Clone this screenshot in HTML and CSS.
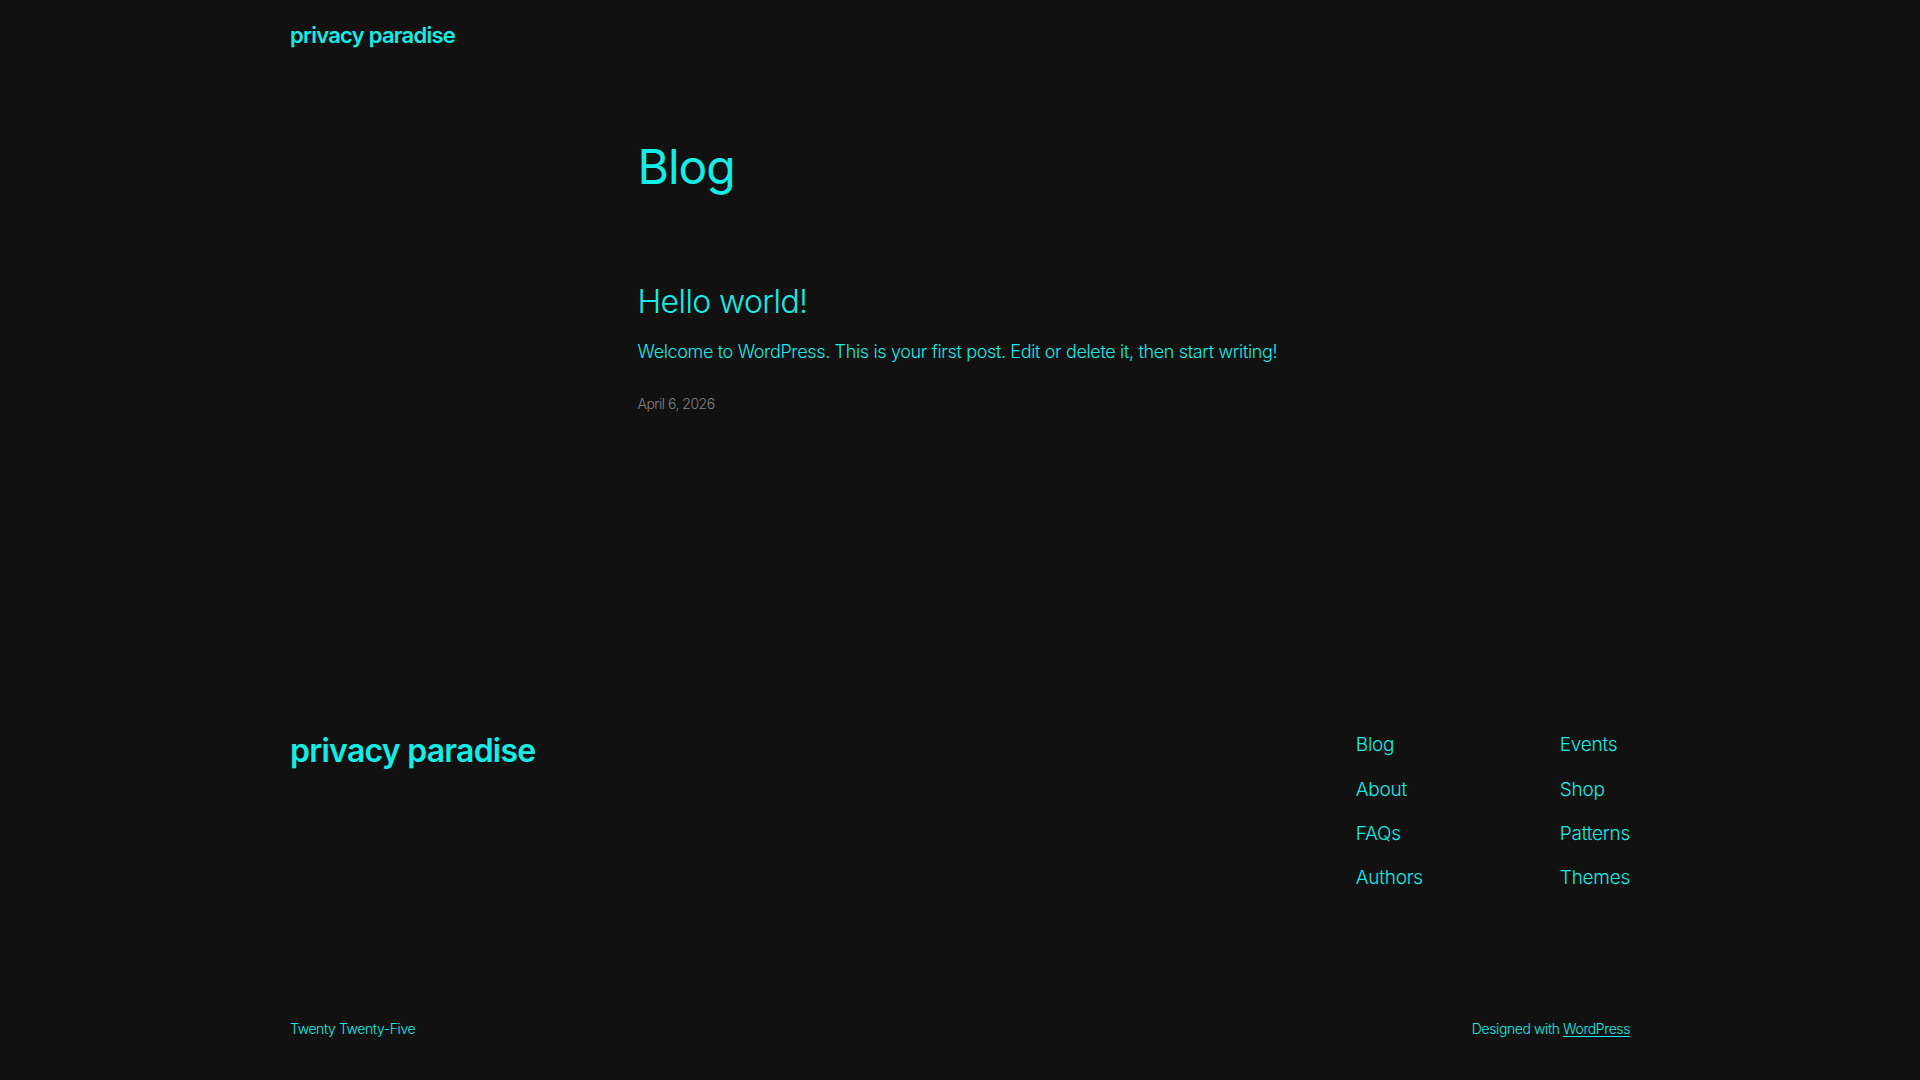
FILE: index.html
```html
<!DOCTYPE html>
<html lang="en">
<head>
<meta charset="utf-8">
<title>Blog – privacy paradise</title>
<link rel="stylesheet" href="styles.css">
</head>
<body>
<header class="site-header">
  <div class="wide">
    <a class="site-title" href="#">privacy paradise</a>
  </div>
</header>
<main class="site-main">
  <div class="content">
    <h1 class="page-title">Blog</h1>
    <article class="post">
      <h2 class="post-title"><a href="#">Hello world!</a></h2>
      <p class="post-excerpt">Welcome to WordPress. This is your first post. Edit or delete it, then start writing!</p>
      <time class="post-date">April 6, 2026</time>
    </article>
  </div>
</main>
<footer class="site-footer">
  <div class="wide footer-top">
    <a class="footer-title" href="#">privacy paradise</a>
    <nav class="footer-nav">
      <ul class="nav-col nav-col-1">
        <li><a href="#">Blog</a></li>
        <li><a href="#">About</a></li>
        <li><a href="#">FAQs</a></li>
        <li><a href="#">Authors</a></li>
      </ul>
      <ul class="nav-col">
        <li><a href="#">Events</a></li>
        <li><a href="#">Shop</a></li>
        <li><a href="#">Patterns</a></li>
        <li><a href="#">Themes</a></li>
      </ul>
    </nav>
  </div>
  <div class="wide footer-bottom">
    <span class="credit">Twenty Twenty-Five</span>
    <span class="credit">Designed with <a class="credit-link" href="#">WordPress</a></span>
  </div>
</footer>
</body>
</html>
```
FILE: styles.css
```css
* { box-sizing: border-box; }
html, body { margin: 0; padding: 0; }
body {
  background: #111111;
  color: #14ece6;
  font-family: Inter, "Noto Sans", sans-serif;
  font-weight: 300;
  min-height: 1080px;
}
a { color: inherit; text-decoration: none; }
ul { list-style: none; margin: 0; padding: 0; }
h1, h2, p { margin: 0; font-weight: inherit; }

.wide { width: 1340px; margin: 0 auto; }
.content { width: 645px; margin: 0 auto; }

.site-header { padding: 22px 0 22px; }
.site-title {
  display: block;
  font-size: 22px;
  line-height: 26.4px;
  font-weight: 600;
  letter-spacing: -0.75px;
}

.site-main { padding-top: 68px; }
.page-title {
  font-size: 48px;
  line-height: 57.6px;
  font-weight: 400;
  letter-spacing: -1px;
}
.post { margin-top: 87px; display: flex; flex-direction: column; }
.post-title {
  font-size: 32px;
  line-height: 38.4px;
  font-weight: 300;
  letter-spacing: -0.6px;
}
.post-excerpt {
  margin-top: 17px;
  font-size: 18px;
  line-height: 28.8px;
  font-weight: 300;
  letter-spacing: -0.35px;
}
.post-date {
  margin-top: 26px;
  font-size: 14px;
  line-height: 21px;
  color: #808080;
  letter-spacing: -0.5px;
}

.site-footer { margin-top: 317.5px; }
.footer-top {
  display: flex;
  justify-content: space-between;
  align-items: flex-start;
}
.footer-title {
  font-size: 32px;
  line-height: 38.4px;
  font-weight: 600;
  letter-spacing: -0.75px;
}
.footer-nav {
  display: flex;
  padding-top: 2.5px;
}
.nav-col {
  display: flex;
  flex-direction: column;
  gap: 22.4px;
  font-size: 19px;
  line-height: 22px;
  letter-spacing: -0.25px;
}
.nav-col-1 { width: 204px; }

.footer-bottom {
  display: flex;
  justify-content: space-between;
  margin-top: 129.5px;
  font-size: 14px;
  line-height: 19.6px;
  letter-spacing: -0.4px;
}
.credit-link { text-decoration: underline; text-underline-offset: 2px; }
```
